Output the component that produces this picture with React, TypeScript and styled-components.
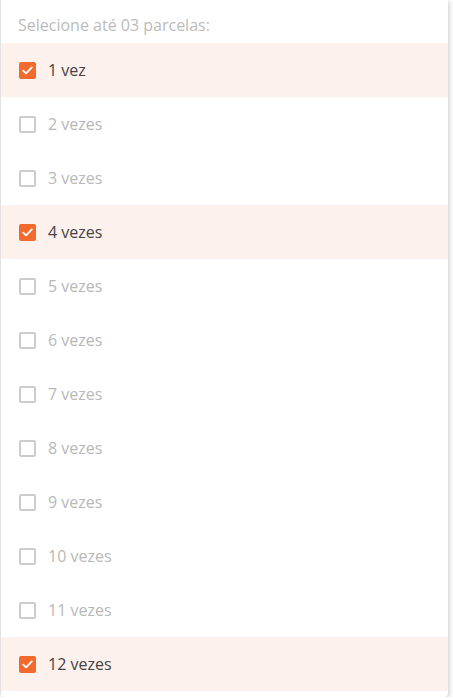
import React, { useState } from "react";
import styled, { createGlobalStyle } from "styled-components";

const GlobalStyle = createGlobalStyle`
  body {
    margin: 0;
    background: #ffffff;
    font-family: "Open Sans", "Liberation Sans", sans-serif;
  }
`;

const MAX = 3;

const App = () => {
  const [selected, setSelected] = useState<number[]>([1, 4, 12]);

  const toggle = (n: number) => {
    setSelected((prev) =>
      prev.includes(n)
        ? prev.filter((v) => v !== n)
        : prev.length >= MAX
        ? prev
        : [...prev, n]
    );
  };

  const options = Array.from({ length: 12 }, (_, i) => i + 1);

  return (
    <>
      <GlobalStyle />
      <Panel>
        <Title>Selecione até 03 parcelas:</Title>
        <List>
          {options.map((n) => {
            const checked = selected.includes(n);
            return (
              <Row key={n} checked={checked} onClick={() => toggle(n)}>
                <Box checked={checked}>
                  {checked && (
                    <svg width="11" height="9" viewBox="0 0 11 9">
                      <path
                        d="M1.2 4.6 L4.1 7.4 L9.8 1.4"
                        fill="none"
                        stroke="#fff"
                        strokeWidth="1.8"
                        strokeLinecap="round"
                        strokeLinejoin="round"
                      />
                    </svg>
                  )}
                </Box>
                <Label checked={checked}>
                  {n} {n === 1 ? "vez" : "vezes"}
                </Label>
              </Row>
            );
          })}
        </List>
      </Panel>
    </>
  );
};

export default App;

const Panel = styled.div`
  width: 448px;
  height: 697px;
  box-sizing: border-box;
  background: #ffffff;
  border-left: 1px solid #e2e2e2;
  border-radius: 0 0 4px 4px;
  box-shadow: 2px 1px 4px rgba(0, 0, 0, 0.16);
  padding-bottom: 6px;
`;

const Title = styled.div`
  height: 43px;
  box-sizing: border-box;
  padding: 14px 0 0 17px;
  font-size: 16px;
  line-height: 22px;
  color: #bbbbbb;
`;

const List = styled.div`
  display: flex;
  flex-direction: column;
`;

const Row = styled.label<{ checked: boolean }>`
  display: flex;
  align-items: center;
  gap: 12px;
  height: 54px;
  padding-left: 18px;
  background: ${({ checked }) => (checked ? "#fdf1ed" : "transparent")};
  cursor: pointer;
`;

const Box = styled.span<{ checked: boolean }>`
  width: 17px;
  height: 17px;
  box-sizing: border-box;
  border-radius: 2px;
  display: flex;
  align-items: center;
  justify-content: center;
  background: ${({ checked }) => (checked ? "#f26a2d" : "#ffffff")};
  border: ${({ checked }) => (checked ? "none" : "2px solid #cccccc")};
`;

const Label = styled.span<{ checked: boolean }>`
  font-size: 16px;
  line-height: 20px;
  margin-top: -1px;
  color: ${({ checked }) => (checked ? "#444444" : "#b8b8b8")};
`;
